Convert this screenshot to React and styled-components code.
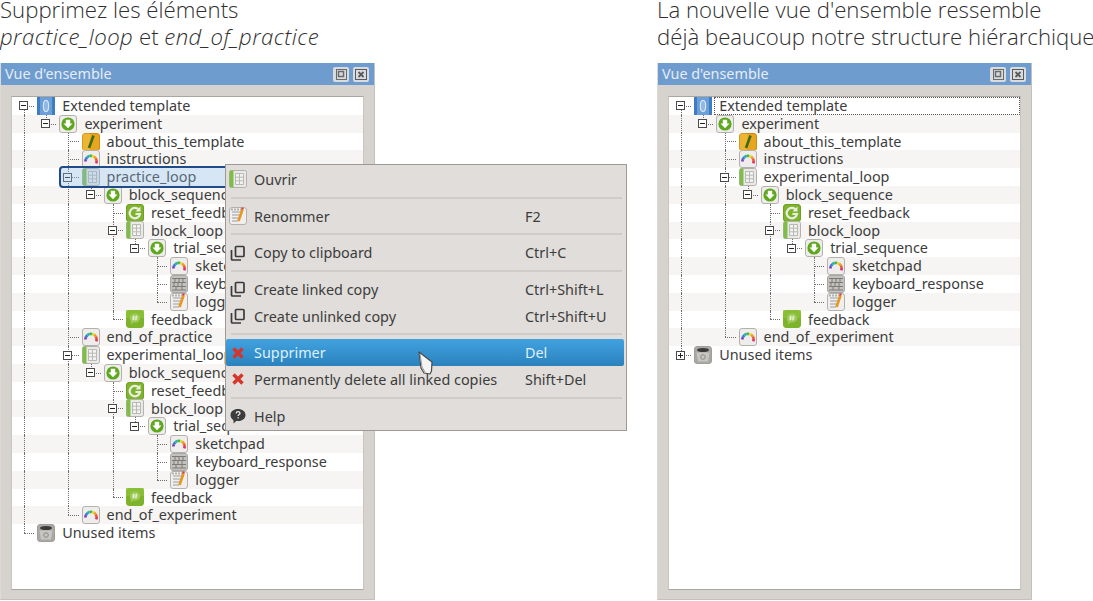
import React from "react";
import styled, { createGlobalStyle } from "styled-components";

const UI_FONT = `"Noto Sans", "Open Sans", sans-serif`;
const ROW_H = 17.8;
const INDENT = 22.2;

const GlobalStyle = createGlobalStyle`
	html, body {
		margin: 0;
		padding: 0;
		background: #fff;
		overflow: hidden;
	}
`;

const Page = styled.div`
	display: flex;
	gap: 282px;
	width: 1093px;
	height: 601px;
`;

const Column = styled.div`
	position: relative;
	width: 375px;
	flex-shrink: 0;
`;

const Heading = styled.div`
	display: flex;
	flex-direction: column;
	gap: 7px;
	height: 63px;
	font-family: "Open Sans", sans-serif;
	font-weight: 300;
	font-size: 22.2px;
	line-height: 20px;
	color: #2f2f2f;
	white-space: nowrap;

	i {
		letter-spacing: 0.42px;
	}
`;

const Panel = styled.div`
	display: flex;
	flex-direction: column;
	height: 537px;
	box-sizing: border-box;
	background: #d6d2ce;
	border: 1px solid #dcd9d6;
	border-top: 0;
	border-right-color: #c4c0bc;
	border-bottom-color: #c4c0bc;
`;

const TitleBar = styled.div`
	display: flex;
	align-items: center;
	gap: 4px;
	height: 22px;
	padding: 0 5px 0 4px;
	flex-shrink: 0;
	background: #6f9ccf;
`;

const Title = styled.span`
	flex: 1;
	padding-bottom: 2px;
	font-family: ${UI_FONT};
	font-size: 14.4px;
	color: #e4ecf5;
`;

const WinButton = styled.span`
	display: flex;
	align-items: center;
	justify-content: center;
	width: 16px;
	height: 15px;
	border-radius: 2px;
	background: #d9dcde;
`;

const PanelBody = styled.div`
	flex: 1;
	min-height: 0;
	display: flex;
	padding: 11px 10px 9px 10px;
`;

const Tree = styled.div`
	flex: 1;
	background: #fff;
	border: 1px solid #aaa6a2;
	border-right-color: #c9c5c1;
	border-left-color: #c9c5c1;
`;

const Row = styled.div`
	position: relative;
	display: flex;
	align-items: center;
	height: ${ROW_H}px;
	background: ${(p) => (p.$odd ? "#f6f5f3" : "#fff")};
`;

const Guide = styled.span`
	position: relative;
	display: flex;
	align-items: center;
	justify-content: center;
	width: ${INDENT}px;
	height: 100%;
	flex-shrink: 0;

	&::before {
		content: ${(p) => (p.$mode === "none" ? "none" : '""')};
		position: absolute;
		left: 12px;
		top: ${(p) => (p.$mode === "first" ? "50%" : "0")};
		bottom: ${(p) => (p.$mode === "end" ? "50%" : "0")};
		border-left: 1px dotted #6d6d6d;
	}

	&::after {
		content: ${(p) => (p.$own ? '""' : "none")};
		position: absolute;
		left: 12px;
		right: 0;
		top: 50%;
		border-top: 1px dotted #6d6d6d;
	}
`;

const Expander = styled.span`
	position: relative;
	z-index: 1;
	width: 9px;
	height: 9px;
	margin-left: 1px;
	box-sizing: border-box;
	border: 1px solid #4b4b4b;
	background: #fff;

	&::before {
		content: "";
		position: absolute;
		left: 1px;
		right: 1px;
		top: 3px;
		height: 1px;
		background: #222;
	}

	&::after {
		content: ${(p) => (p.$open ? "none" : '""')};
		position: absolute;
		top: 1px;
		bottom: 1px;
		left: 3px;
		width: 1px;
		background: #222;
	}
`;

const IconSlot = styled.span`
	display: flex;
	flex-shrink: 0;
	margin-left: 3px;
	width: 18px;
	height: 18px;
`;

const Label = styled.span`
	flex: 1;
	min-width: 0;
	margin-left: ${(p) => (p.$focus ? "2px" : "7px")};
	padding-left: ${(p) => (p.$focus ? "5px" : "0")};
	font-family: ${UI_FONT};
	font-size: 14.4px;
	line-height: ${ROW_H}px;
	color: #3c3c3c;
	white-space: nowrap;
	outline: ${(p) => (p.$focus ? "1px dotted #555" : "none")};
	outline-offset: -1px;
`;

const Selection = styled.span`
	position: absolute;
	z-index: 2;
	left: ${(p) => p.$left}px;
	right: 0;
	top: -2px;
	bottom: -2px;
	box-sizing: border-box;
	border: 2px solid #1f4c86;
	border-radius: 4px;
	background: rgba(140, 182, 224, 0.35);
`;

const Menu = styled.div`
	position: absolute;
	left: 225px;
	top: 164px;
	z-index: 5;
	width: 402px;
	height: 267px;
	box-sizing: border-box;
	padding: 1px 2px 0 0;
	background: #e0ddda;
	border: 1px solid #9d9a96;
`;

const Item = styled.div`
	display: grid;
	grid-template-columns: 25px 271px 1fr;
	align-items: center;
	height: 26.7px;
	padding-left: 3px;
	border-radius: 2px;
	font-family: ${UI_FONT};
	font-size: 14.4px;
	white-space: nowrap;
	color: ${(p) => (p.$active ? "#dff0fb" : "#3c3c3c")};
	background: ${(p) => (p.$active ? "linear-gradient(#41a2e0, #2b82bd)" : "none")};
`;

const Separator = styled.div`
	height: 2px;
	margin: 4px 2px 4px 5px;
	background: #d0cdc9;
`;

const Pointer = styled.svg`
	position: absolute;
	left: 191.5px;
	top: 186px;
`;

const Tile = ({ fill = "#eeedeb", stroke = "#b4b1ad", children }) => (
	<svg width="18" height="18" viewBox="0 0 18 18">
		<rect x="0.5" y="0.5" width="17" height="17" rx="2.5" fill={fill} stroke={stroke} />
		{children}
	</svg>
);

const TemplateIcon = () => (
	<svg width="18" height="18" viewBox="0 0 18 18">
		<rect width="18" height="18" fill="#3e7cc4" />
		<rect x="3" y="0" width="12" height="18" fill="#6a9fd8" />
		<ellipse cx="9" cy="9" rx="2.6" ry="5.6" fill="#8fb8e4" stroke="#d8e6f4" strokeWidth="1.2" />
	</svg>
);

const SequenceIcon = () => (
	<Tile>
		<circle cx="9" cy="9" r="6.6" fill="#5da81c" />
		<path d="M6.8 4.8h4.4v3.6h2.3L9 13.2 4.5 8.4h2.3z" fill="#fff" />
	</Tile>
);

const AboutIcon = () => (
	<Tile fill="#e8a61e" stroke="#c98d17">
		<rect x="0.5" y="0.5" width="8" height="17" rx="2" fill="#f0c040" opacity="0.6" />
		<path d="M11.5 2.5 7 15" stroke="#3d6b1a" strokeWidth="2.6" />
	</Tile>
);

const GAUGE_COLORS = ["#7a3bc0", "#2f7fd6", "#25b0b0", "#39b54a", "#e6d52a", "#f09a1e", "#ea5a2a", "#e0306a"];

// one short arc per colour, from the lower left round to the lower right
const GaugeIcon = () => {
	const step = 200 / GAUGE_COLORS.length;
	const at = (deg) => {
		const rad = ((190 + deg) * Math.PI) / 180;
		return `${(9 + 5.6 * Math.cos(rad)).toFixed(2)} ${(11.5 + 5.6 * Math.sin(rad)).toFixed(2)}`;
	};
	return (
		<Tile>
			<g fill="none" strokeWidth="2.6">
				{GAUGE_COLORS.map((color, i) => (
					<path key={color} d={`M${at(i * step - 10)}A5.6 5.6 0 0 1 ${at((i + 1) * step - 10)}`} stroke={color} />
				))}
			</g>
		</Tile>
	);
};

const LoopIcon = () => (
	<svg width="18" height="18" viewBox="0 0 18 18">
		<rect x="0.5" y="0.5" width="17" height="17" rx="2" fill="#e9e9e7" stroke="#b4b1ad" />
		<path d="M2 0.5h2.5v17H2A1.5 1.5 0 0 1 .5 16V2A1.5 1.5 0 0 1 2 .5z" fill="#7fbd48" />
		<path d="M6.5 3.5h8v11h-8zM6.5 7.2h8M6.5 10.8h8M10.5 3.5v11" fill="#f2f2f0" stroke="#b9b9b5" />
	</svg>
);

const ResetIcon = () => (
	<Tile fill="#7db42b" stroke="#6da024">
		<path d="M13.2 6.2A5.2 5.2 0 1 0 14 10H9.4" fill="none" stroke="#e9eee0" strokeWidth="2.2" />
		<path d="M14.5 2.5v5h-5z" fill="#e9eee0" />
	</Tile>
);

const KeyboardIcon = () => (
	<Tile fill="#c4c2be" stroke="#a9a7a3">
		<path d="M2 3.5h14M2 7.5h14M2 11.5h14M2 15h14M5 3.5v4M9 3.5v4M13 3.5v4M4 7.5v4M8 7.5v4M12 7.5v4M6 11.5V15M12 11.5V15" stroke="#7d7b75" fill="none" />
	</Tile>
);

const LoggerIcon = () => (
	<Tile fill="#f0efed">
		<path d="M3 5h11M3 8h8M3 11h7M3 14h6" stroke="#9a9da3" strokeWidth="1.1" />
		<path d="M3 1.5v2M6 1.5v2M9 1.5v2M12 1.5v2" stroke="#777" />
		<path d="M13.5 2.5 9.5 14" stroke="#e8961e" strokeWidth="2.6" />
		<path d="M13.2 2.5l.6-1.8" stroke="#d9382e" strokeWidth="2.2" />
	</Tile>
);

const FeedbackIcon = () => (
	<Tile fill="#7db42b" stroke="#7db42b">
		<rect x="0" y="0" width="18" height="8" fill="#8fc33a" opacity="0.7" />
		<path d="M9 3.5c3 0 5.2 1.9 5.2 4.5S12 12.5 9 12.5H7.5L5 14.5v-3C4 10.5 3.8 9.3 3.8 8 3.8 5.4 6 3.5 9 3.5z" fill="#9cc95a" />
		<path d="M7.8 5.5 7.2 10.500M10.4 5.500 9.800 10.500M6.200 7h5.500M6 9h5.500" stroke="#eef4df" strokeWidth="0.9" />
	</Tile>
);

const TrashIcon = () => (
	<Tile fill="#a9a8a5" stroke="#a09f9c">
		<ellipse cx="9" cy="4" rx="6" ry="2" fill="#3a3a3a" />
		<path d="M2.5 6.500 4 15.500h10l1.500-9" fill="#c7c6c3" />
		<circle cx="9" cy="11" r="2.3" fill="none" stroke="#8a8986" />
	</Tile>
);

const CopyIcon = () => (
	<svg width="18" height="18" viewBox="0 0 18 18" fill="none" stroke="#3a3a3a" strokeWidth="1.7">
		<rect x="6.5" y="2.5" width="8.5" height="10" rx="1" />
		<path d="M2.5 6v9a1 1 0 0 0 1 1H12" />
	</svg>
);

const DeleteIcon = () => (
	<svg width="18" height="18" viewBox="0 0 18 18">
		<path d="M4.5 4.5l9 9M13.500 4.500l-9 9" stroke="#d6352b" strokeWidth="3.4" />
	</svg>
);

const HelpIcon = () => (
	<svg width="18" height="18" viewBox="0 0 18 18">
		<path d="M9 2c4.200 0 7.500 2.500 7.500 6s-3.200 6-7 6c-.8 0-1.300 0-2-.2L4.500 16.500v-3.300C2.800 12.100 1.500 10.300 1.500 8 1.500 4.500 4.800 2 9 2z" fill="#3c3c3c" />
		<path d="M7.200 6.400c0-1.100.8-1.700 1.900-1.700s1.900.6 1.900 1.600c0 1.300-1.900 1.300-1.900 2.700" fill="none" stroke="#e8e8e8" strokeWidth="1.3" />
		<path d="M9.100 10.200v1.300" stroke="#e8e8e8" strokeWidth="1.3" />
	</svg>
);

const ICONS = {
	template: TemplateIcon,
	sequence: SequenceIcon,
	about: AboutIcon,
	gauge: GaugeIcon,
	loop: LoopIcon,
	reset: ResetIcon,
	keyboard: KeyboardIcon,
	logger: LoggerIcon,
	feedback: FeedbackIcon,
	trash: TrashIcon,
};

const n = (label, icon, children, extra) => ({ label, icon, children, ...extra });

const trial = () => [
	n("reset_feedback", "reset"),
	n("block_loop", "loop", [
		n("trial_sequence", "sequence", [
			n("sketchpad", "gauge"),
			n("keyboard_response", "keyboard"),
			n("logger", "logger"),
		]),
	]),
	n("feedback", "feedback"),
];

const leftTree = [
	n("Extended template", "template", [
		n("experiment", "sequence", [
			n("about_this_template", "about"),
			n("instructions", "gauge"),
			n("practice_loop", "loop", [n("block_sequence", "sequence", trial())], { selected: true }),
			n("end_of_practice", "gauge"),
			n("experimental_loop", "loop", [n("block_sequence", "sequence", trial())]),
			n("end_of_experiment", "gauge"),
		]),
	]),
	n("Unused items", "trash"),
];

const rightTree = [
	n(
		"Extended template",
		"template",
		[
			n("experiment", "sequence", [
				n("about_this_template", "about"),
				n("instructions", "gauge"),
				n("experimental_loop", "loop", [n("block_sequence", "sequence", trial())]),
				n("end_of_experiment", "gauge"),
			]),
		],
		{ focus: true },
	),
	n("Unused items", "trash", null, { collapsed: true }),
];

// turn the nested items into rows, with what each indent column has to draw
function flatten(nodes, guides = [], out = []) {
	nodes.forEach((node, i) => {
		const last = i === nodes.length - 1;
		const first = guides.length === 0 && i === 0;
		out.push({ ...node, guides, own: first ? "first" : last ? "end" : "tee" });
		if (node.children) flatten(node.children, [...guides, !last], out);
	});
	return out;
}

function OverviewPanel({ tree }) {
	const rows = flatten(tree);
	return (
		<Panel>
			<TitleBar>
				<Title>Vue d'ensemble</Title>
				<WinButton>
					<svg width="12" height="11" viewBox="0 0 12 11" fill="none" stroke="#6b6b6b">
						<rect x="1.5" y="0.5" width="10" height="10" />
						<rect x="3.5" y="2.5" width="5" height="5" strokeWidth="1.5" />
					</svg>
				</WinButton>
				<WinButton>
					<svg width="12" height="11" viewBox="0 0 12 11" fill="none" stroke="#5a5a5a">
						<rect x="0.5" y="0.5" width="11" height="10" />
						<path d="M3.5 3l5 5M8.5 3l-5 5" strokeWidth="1.8" />
					</svg>
				</WinButton>
			</TitleBar>
			<PanelBody>
				<Tree>
					{rows.map((row, i) => {
						const Icon = ICONS[row.icon];
						return (
							<Row key={i} $odd={i % 2 === 1}>
								{row.guides.map((on, j) => (
									<Guide key={j} $mode={on ? "pass" : "none"} />
								))}
								<Guide $mode={row.own} $own>
									{(row.children || row.collapsed) && <Expander $open={!row.collapsed} />}
								</Guide>
								<IconSlot>
									<Icon />
								</IconSlot>
								<Label $focus={row.focus}>{row.label}</Label>
								{row.selected && <Selection $left={row.guides.length * INDENT + 3} />}
							</Row>
						);
					})}
				</Tree>
			</PanelBody>
		</Panel>
	);
}

export default function App() {
	return (
		<Page>
			<GlobalStyle />
			<Column>
				<Heading>
					<span>Supprimez les éléments</span>
					<span>
						<i>practice_loop</i> et <i>end_of_practice</i>
					</span>
				</Heading>
				<OverviewPanel tree={leftTree} />
				<Menu>
					<Item>
						<LoopIcon />
						<span>Ouvrir</span>
					</Item>
					<Separator />
					<Item>
						<LoggerIcon />
						<span>Renommer</span>
						<span>F2</span>
					</Item>
					<Separator />
					<Item>
						<CopyIcon />
						<span>Copy to clipboard</span>
						<span>Ctrl+C</span>
					</Item>
					<Separator />
					<Item>
						<CopyIcon />
						<span>Create linked copy</span>
						<span>Ctrl+Shift+L</span>
					</Item>
					<Item>
						<CopyIcon />
						<span>Create unlinked copy</span>
						<span>Ctrl+Shift+U</span>
					</Item>
					<Separator />
					<Item $active>
						<DeleteIcon />
						<span>Supprimer</span>
						<span>Del</span>
					</Item>
					<Item>
						<DeleteIcon />
						<span>Permanently delete all linked copies</span>
						<span>Shift+Del</span>
					</Item>
					<Separator />
					<Item>
						<HelpIcon />
						<span>Help</span>
					</Item>
					<Pointer width="16" height="26" viewBox="0 0 16 26">
						<path d="M1 1 14 11l-.5 9-1.500 3-6-1-3-5z" fill="#f4f4f4" stroke="#4a4a4a" strokeWidth="1.2" strokeLinejoin="round" />
						<path d="M2 3l2 13 3 5" fill="none" stroke="#9a9a9a" />
					</Pointer>
				</Menu>
			</Column>
			<Column>
				<Heading>
					<span>La nouvelle vue d'ensemble ressemble</span>
					<span>déjà beaucoup notre structure hiérarchique</span>
				</Heading>
				<OverviewPanel tree={rightTree} />
			</Column>
		</Page>
	);
}
